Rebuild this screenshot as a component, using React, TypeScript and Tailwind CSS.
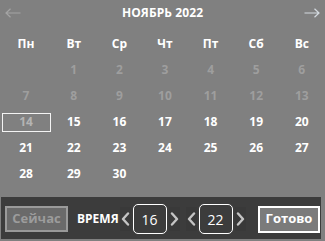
const weekDays = ['Пн', 'Вт', 'Ср', 'Чт', 'Пт', 'Сб', 'Вс']

// ноябрь 2022 начинается со вторника
const cells: (number | null)[] = [null, ...Array.from({ length: 30 }, (_, i) => i + 1)]

function Arrow({ dir, className }: { dir: 'left' | 'right'; className?: string }) {
  return (
    <svg width="16" height="10" viewBox="0 0 16 10" className={className} fill="none" stroke="currentColor" strokeWidth="1.2">
      {dir === 'left' ? (
        <path d="M15.5 5H1M5.5 0.8L1 5l4.5 4.2" />
      ) : (
        <path d="M0.5 5H15M10.5 0.8L15 5l-4.5 4.2" />
      )}
    </svg>
  )
}

function Chevron({ dir }: { dir: 'left' | 'right' }) {
  return (
    <span className="w-[11px] h-[24px] flex items-center justify-center bg-[#393939] text-[#c4c4c4]">
      <svg width="9" height="14" viewBox="0 0 9 14" fill="none" stroke="currentColor" strokeWidth="2.4" strokeLinecap="round" strokeLinejoin="round">
        {dir === 'left' ? <path d="M7 1.5L2 7l5 5.5" /> : <path d="M2 1.5L7 7l-5 5.5" />}
      </svg>
    </span>
  )
}

function Spinner({ value }: { value: string }) {
  return (
    <div className="flex items-center gap-[2px]">
      <Chevron dir="left" />
      <span className="w-[34px] h-[30px] border border-white rounded-[5px] flex items-center justify-center text-[14px] text-white font-normal">
        {value}
      </span>
      <Chevron dir="right" />
    </div>
  )
}

export default function App() {
  return (
    <div className="w-[325px] h-[241px] bg-[#808080] overflow-hidden" style={{ fontFamily: '"Open Sans", "Noto Sans", sans-serif' }}>
      <div className="h-[26px] flex items-center justify-between px-[5px]">
        <Arrow dir="left" className="text-[#a4a4a4]" />
        <span className="text-[12px] font-bold text-white tracking-[0.1px]">НОЯБРЬ 2022</span>
        <Arrow dir="right" className="text-[#d4dae0]" />
      </div>

      <div className="mt-[5px] pl-[1px] grid grid-cols-[50px_repeat(6,45.6px)] auto-rows-[26px] text-[12px] font-bold">
        {weekDays.map((d) => (
          <div key={d} className="flex items-center justify-center text-white">{d}</div>
        ))}
        {cells.map((n, i) => (
          <div key={i} className="flex items-center justify-center">
            {n === 14 ? (
              <span className="w-[49px] h-[19px] border-[1.5px] border-[#f4f4f4] flex items-center justify-center text-[#b4b4b4]">14</span>
            ) : n !== null ? (
              <span className={n < 14 ? 'text-[#9e9e9e]' : 'text-white'}>{n}</span>
            ) : null}
          </div>
        ))}
      </div>

      <div className="mt-[10px] ml-[1px] w-[320px] h-[42px] bg-[#3c3c3c] flex items-center pl-[4px] pt-[2px] text-[12px] font-bold">
        <button className="w-[63px] h-[26px] border-2 border-[#9a9a9a] bg-[#6a6a6a] text-[#9c9c9c] text-[13px]">Сейчас</button>
        <span className="ml-[9px] text-white">ВРЕМЯ</span>
        <div className="ml-[1px] flex items-center gap-[6px]">
          <Spinner value="16" />
          <Spinner value="22" />
        </div>
        <button className="ml-auto mr-[1px] w-[62px] h-[27px] border-2 border-white bg-[#7b7b7b] text-white text-[13px]">Готово</button>
      </div>
    </div>
  )
}
